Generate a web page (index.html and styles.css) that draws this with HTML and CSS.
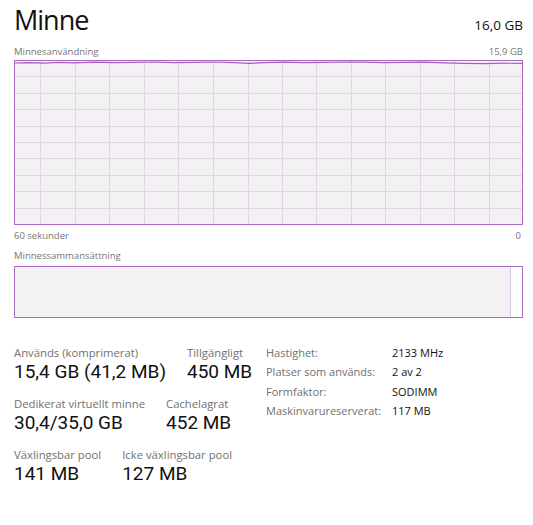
FILE: index.html
```html
<!DOCTYPE html>
<html lang="sv">
<head>
<meta charset="utf-8">
<link rel="stylesheet" href="styles.css">
</head>
<body>
<div class="page">
  <div class="header">
    <div class="title">Minne</div>
    <div class="total">16,0 GB</div>
  </div>
  <div class="chart-labels">
    <span>Minnesanvändning</span>
    <span>15,9 GB</span>
  </div>
  <svg class="chart" width="509" height="165" viewBox="0 0 509 165">
    <rect x="0.5" y="0.5" width="508" height="164" fill="#f4f1f5"/>
    <g stroke="#e0d7e3" stroke-width="1">
      <line x1="26.5" y1="0" x2="26.5" y2="165"/>
      <line x1="61.5" y1="0" x2="61.5" y2="165"/>
      <line x1="95.5" y1="0" x2="95.5" y2="165"/>
      <line x1="130.5" y1="0" x2="130.5" y2="165"/>
      <line x1="164.5" y1="0" x2="164.5" y2="165"/>
      <line x1="199.5" y1="0" x2="199.5" y2="165"/>
      <line x1="234.5" y1="0" x2="234.5" y2="165"/>
      <line x1="268.5" y1="0" x2="268.5" y2="165"/>
      <line x1="302.5" y1="0" x2="302.5" y2="165"/>
      <line x1="337.5" y1="0" x2="337.5" y2="165"/>
      <line x1="371.5" y1="0" x2="371.5" y2="165"/>
      <line x1="406.5" y1="0" x2="406.5" y2="165"/>
      <line x1="440.5" y1="0" x2="440.5" y2="165"/>
      <line x1="475.5" y1="0" x2="475.5" y2="165"/>
      <line x1="0" y1="16.5" x2="509" y2="16.5"/>
      <line x1="0" y1="33.5" x2="509" y2="33.5"/>
      <line x1="0" y1="49.5" x2="509" y2="49.5"/>
      <line x1="0" y1="66.5" x2="509" y2="66.5"/>
      <line x1="0" y1="82.5" x2="509" y2="82.5"/>
      <line x1="0" y1="98.5" x2="509" y2="98.5"/>
      <line x1="0" y1="115.5" x2="509" y2="115.5"/>
      <line x1="0" y1="131.5" x2="509" y2="131.5"/>
      <line x1="0" y1="148.5" x2="509" y2="148.5"/>
    </g>
    <polyline fill="none" stroke="#a55fbd" stroke-width="1.2" points="0,3 15,2.6 30,3.2 45,2.4 60,2.8 80,2.2 100,2.6 120,2.4 140,2 160,2.6 180,2.4 200,2 220,2.6 235,3.4 250,2.6 270,2.2 290,2.6 310,2.4 330,2 350,2.2 370,2.6 390,2.4 410,2.2 430,2.8 450,3.4 470,3.6 490,3.2 509,3.4"/>
    <rect x="0.5" y="0.5" width="508" height="164" fill="none" stroke="#a96bc0"/>
  </svg>
  <div class="axis-labels">
    <span>60 sekunder</span>
    <span>0</span>
  </div>
  <div class="comp-label">Minnessammansättning</div>
  <div class="comp">
    <div class="comp-used"></div>
    <div class="comp-free"></div>
  </div>
  <div class="stats">
    <div class="left">
      <div class="row">
        <div class="stat"><div class="label">Används (komprimerat)</div><div class="value">15,4 GB (41,2 MB)</div></div>
        <div class="stat"><div class="label">Tillgängligt</div><div class="value">450 MB</div></div>
      </div>
      <div class="row">
        <div class="stat"><div class="label">Dedikerat virtuellt minne</div><div class="value">30,4/35,0 GB</div></div>
        <div class="stat"><div class="label">Cachelagrat</div><div class="value">452 MB</div></div>
      </div>
      <div class="row">
        <div class="stat"><div class="label">Växlingsbar pool</div><div class="value">141 MB</div></div>
        <div class="stat"><div class="label">Icke växlingsbar pool</div><div class="value">127 MB</div></div>
      </div>
    </div>
    <div class="details">
      <div class="dk">Hastighet:</div><div class="dv">2133 MHz</div>
      <div class="dk">Platser som används:</div><div class="dv">2 av 2</div>
      <div class="dk">Formfaktor:</div><div class="dv">SODIMM</div>
      <div class="dk">Maskinvarureserverat:</div><div class="dv">117 MB</div>
    </div>
  </div>
</div>
</body>
</html>
```

FILE: styles.css
```css
html, body {
  margin: 0;
  padding: 0;
  background: #ffffff;
}
body {
  font-family: "Open Sans", "Noto Sans", sans-serif;
  color: #000;
}
.page {
  width: 509px;
  padding: 0 0 0 14px;
}
.header {
  display: flex;
  justify-content: space-between;
  align-items: baseline;
  height: 44px;
}
.title {
  font-size: 27px;
  line-height: 40px;
  letter-spacing: -1px;
  color: #111;
}
.total {
  font-size: 13.5px;
  color: #111;
}
.chart-labels, .axis-labels {
  display: flex;
  justify-content: space-between;
  font-size: 9.5px;
  color: #777;
  line-height: 16px;
}
.chart-labels { height: 16px; }
.chart {
  display: block;
}
.axis-labels {
  margin-top: 3px;
  padding-right: 2px;
}
.comp-label {
  font-size: 9.5px;
  color: #777;
  line-height: 16px;
  margin-top: 4px;
}
.comp {
  display: flex;
  height: 50px;
  border: 1px solid #a96bc0;
  margin-top: 2px;
}
.comp-used {
  flex: 1;
  background: #f4f1f5;
  border-right: 1px solid #d7c4de;
}
.comp-free {
  width: 11px;
  background: #fff;
}
.stats {
  display: flex;
  margin-top: 28px;
}
.left {
  width: 252px;
  display: flex;
  flex-direction: column;
  gap: 15px;
}
.row {
  display: flex;
  gap: 21px;
}
.label {
  font-size: 11.3px;
  color: #707070;
  line-height: 14px;
}
.value {
  font-family: Roboto, "Open Sans", sans-serif;
  font-size: 19px;
  line-height: 20px;
  margin-top: 2px;
  color: #111;
}
.details {
  display: grid;
  grid-template-columns: 126px auto;
  row-gap: 3.3px;
  font-size: 11px;
  line-height: 16px;
  align-content: start;
  margin-top: -1px;
}
.dk { color: #707070; }
.dv { color: #111; }
```
